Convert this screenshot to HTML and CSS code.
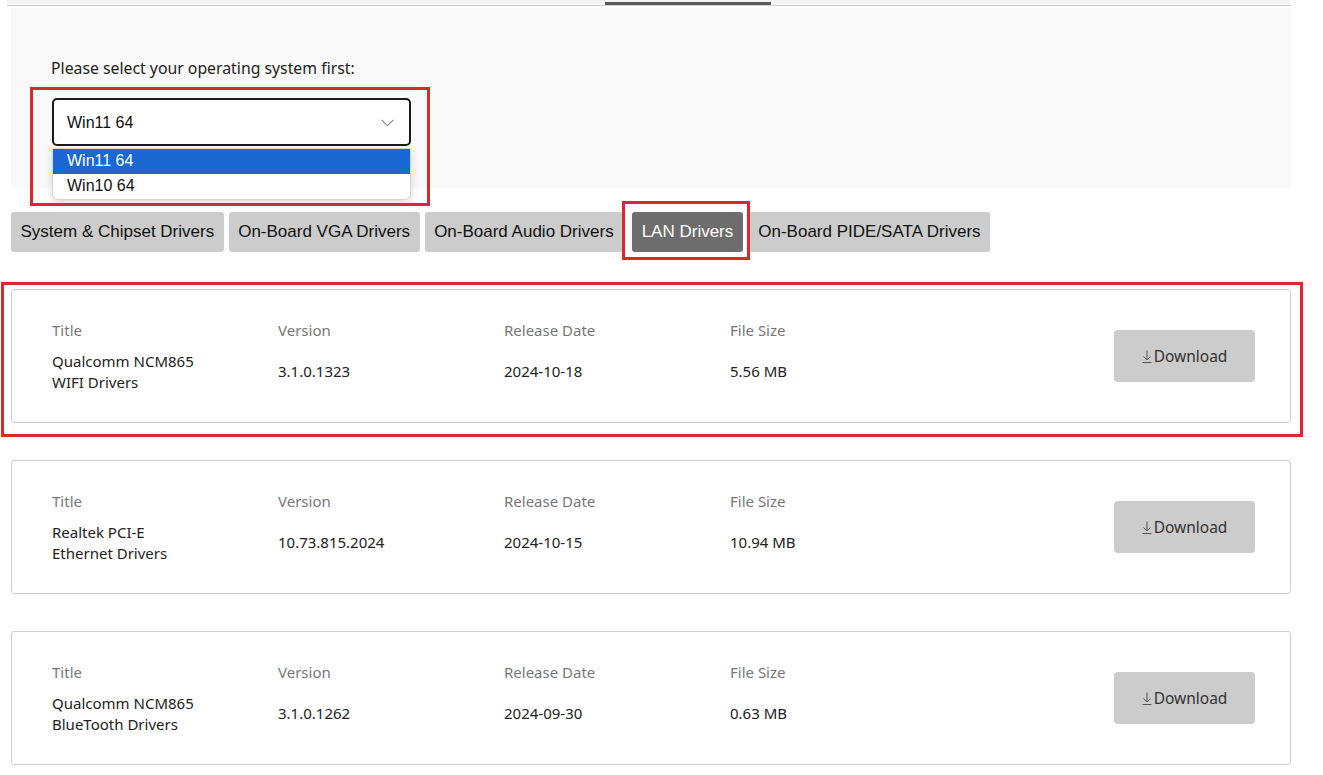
FILE: index.html
```html
<!DOCTYPE html>
<html lang="en">
<head>
<meta charset="utf-8">
<title>Drivers</title>
<link rel="stylesheet" href="styles.css">
</head>
<body>
<div class="page">
  <div class="topnav">
    <span class="topnav-spacer"></span>
    <span class="topnav-indicator"></span>
  </div>

  <section class="os-panel">
    <p class="os-label">Please select your operating system first:</p>
    <div class="os-select-wrap">
      <div class="os-select">
        <span>Win11 64</span>
        <svg class="chevron" width="13" height="8" viewBox="0 0 13 8"><path d="M0.5 0.8 L6.5 6.8 L12.5 0.8" fill="none" stroke="#555" stroke-width="1"/></svg>
      </div>
      <ul class="os-options">
        <li class="selected">Win11 64</li>
        <li>Win10 64</li>
      </ul>
      <span class="mark mark-select"></span>
    </div>
  </section>

  <nav class="tabs">
    <button class="tab">System &amp; Chipset Drivers</button>
    <button class="tab">On-Board VGA Drivers</button>
    <button class="tab">On-Board Audio Drivers</button>
    <button class="tab active">LAN Drivers<span class="mark mark-tab"></span></button>
    <button class="tab">On-Board PIDE/SATA Drivers</button>
  </nav>

  <div class="cards">
    <article class="card">
      <div class="info">
        <span class="lbl">Title</span><span class="lbl">Version</span><span class="lbl">Release Date</span><span class="lbl">File Size</span>
        <span class="val">Qualcomm NCM865<br>WIFI Drivers</span><span class="val">3.1.0.1323</span><span class="val">2024-10-18</span><span class="val">5.56 MB</span>
      </div>
      <button class="dl"><svg class="dl-icon" width="10" height="13" viewBox="0 0 10 13"><path d="M5 0.5 V10 M1.5 6.5 L5 10 L8.5 6.5 M0.5 12.5 H9.5" fill="none" stroke="#555" stroke-width="1"/></svg>Download</button>
      <span class="mark mark-card"></span>
    </article>

    <article class="card">
      <div class="info">
        <span class="lbl">Title</span><span class="lbl">Version</span><span class="lbl">Release Date</span><span class="lbl">File Size</span>
        <span class="val">Realtek PCI-E<br>Ethernet Drivers</span><span class="val">10.73.815.2024</span><span class="val">2024-10-15</span><span class="val">10.94 MB</span>
      </div>
      <button class="dl"><svg class="dl-icon" width="10" height="13" viewBox="0 0 10 13"><path d="M5 0.5 V10 M1.5 6.5 L5 10 L8.5 6.5 M0.5 12.5 H9.5" fill="none" stroke="#555" stroke-width="1"/></svg>Download</button>
    </article>

    <article class="card">
      <div class="info">
        <span class="lbl">Title</span><span class="lbl">Version</span><span class="lbl">Release Date</span><span class="lbl">File Size</span>
        <span class="val">Qualcomm NCM865<br>BlueTooth Drivers</span><span class="val">3.1.0.1262</span><span class="val">2024-09-30</span><span class="val">0.63 MB</span>
      </div>
      <button class="dl"><svg class="dl-icon" width="10" height="13" viewBox="0 0 10 13"><path d="M5 0.5 V10 M1.5 6.5 L5 10 L8.5 6.5 M0.5 12.5 H9.5" fill="none" stroke="#555" stroke-width="1"/></svg>Download</button>
    </article>
  </div>
</div>
</body>
</html>
```

FILE: styles.css
```css
* { box-sizing: border-box; }

html, body {
  margin: 0;
  padding: 0;
  background: #fff;
}

body {
  font-family: "Noto Sans", "Open Sans", sans-serif;
  color: #333;
  overflow: hidden;
}

.page {
  width: 1291px;
  padding-left: 11px;
}

/* thin strip with the section underline */
.topnav {
  display: flex;
  align-items: flex-end;
  height: 6px;
  margin-left: -4px;
  border-bottom: 1px solid #cfcfcf;
  background: linear-gradient(#f1f1f1, #fafafa);
}
.topnav-spacer { width: 598px; }
.topnav-indicator {
  width: 166px;
  height: 3px;
  background: #5a5a5a;
}

/* OS chooser */
.os-panel {
  margin-top: 2px;
  background: #f9f9f9;
  padding: 50px 40px 42px;
  height: 180px;
}
.os-label {
  margin: 0 0 20px;
  font-size: 15.8px;
  line-height: 20px;
  color: #222;
}
.os-select-wrap {
  position: relative;
  width: 359px;
  margin-left: 1px;
}
.os-select {
  display: flex;
  align-items: center;
  justify-content: space-between;
  height: 48px;
  padding: 0 14px 0 13px;
  border: 2px solid #1a1a1a;
  border-radius: 5px;
  background: #fff;
  font-family: "Liberation Sans", Arial, sans-serif;
  font-size: 16px;
  color: #111;
}
.os-select span { margin-top: 2px; }
.chevron { margin-right: 1px; margin-top: 1px; }

.os-options {
  position: absolute;
  left: 0;
  right: 0;
  top: 50px;
  margin: 0;
  padding: 0;
  list-style: none;
  background: #fff;
  border: 1px solid #d6d6d6;
  border-radius: 0 0 6px 6px;
  box-shadow: 0 3px 8px rgba(0,0,0,0.15);
  overflow: hidden;
  font-family: "Liberation Sans", Arial, sans-serif;
  font-size: 16px;
  color: #111;
  z-index: 2;
}
.os-options li {
  height: 25px;
  line-height: 24px;
  padding-left: 14px;
}
.os-options li.selected {
  background: #1b68d3;
  color: #fff;
}

/* red annotation frames */
.mark {
  position: absolute;
  border: 3px solid #e0252b;
  pointer-events: none;
  z-index: 3;
}
.mark-select { left: -22px; top: -11px; width: 400px; height: 119px; }
.mark-tab { left: -10px; top: -11px; right: -7px; bottom: -8px; }
.mark-card { left: -11px; top: -8px; right: -13px; bottom: -15px; }

/* category tabs */
.tabs {
  display: flex;
  gap: 5px;
  margin-top: 24px;
}
.tab {
  position: relative;
  height: 40px;
  padding: 0 9.5px;
  border: 0;
  border-radius: 3px;
  background: #cccccc;
  font-family: "Liberation Sans", Arial, sans-serif;
  font-size: 17px;
  color: #111;
}
.tab.active {
  background: #6d6d6d;
  color: #fff;
  margin: 0 1px 0 4px;
}

/* driver cards */
.cards {
  display: flex;
  flex-direction: column;
  gap: 37px;
  margin-top: 37px;
}
.card {
  position: relative;
  display: flex;
  align-items: center;
  height: 134px;
  padding: 0 35px 0 40px;
  border: 1px solid #cfcfcf;
  border-radius: 3px;
  background: #fff;
}
.info {
  display: grid;
  grid-template-columns: repeat(4, 226px);
  grid-template-rows: 20px 42px;
  row-gap: 11px;
  align-items: center;
}
.lbl {
  font-size: 15px;
  color: #777;
}
.val {
  font-size: 15px;
  line-height: 21px;
  color: #222;
}
.dl {
  display: flex;
  align-items: center;
  justify-content: center;
  margin-left: auto;
  width: 141px;
  height: 52px;
  border: 0;
  border-radius: 4px;
  background: #cccccc;
  font-family: "Noto Sans", "Open Sans", sans-serif;
  font-size: 15.5px;
  color: #333;
  padding: 0;
}
.dl-icon { margin-right: 2px; margin-top: 1px; }
```
